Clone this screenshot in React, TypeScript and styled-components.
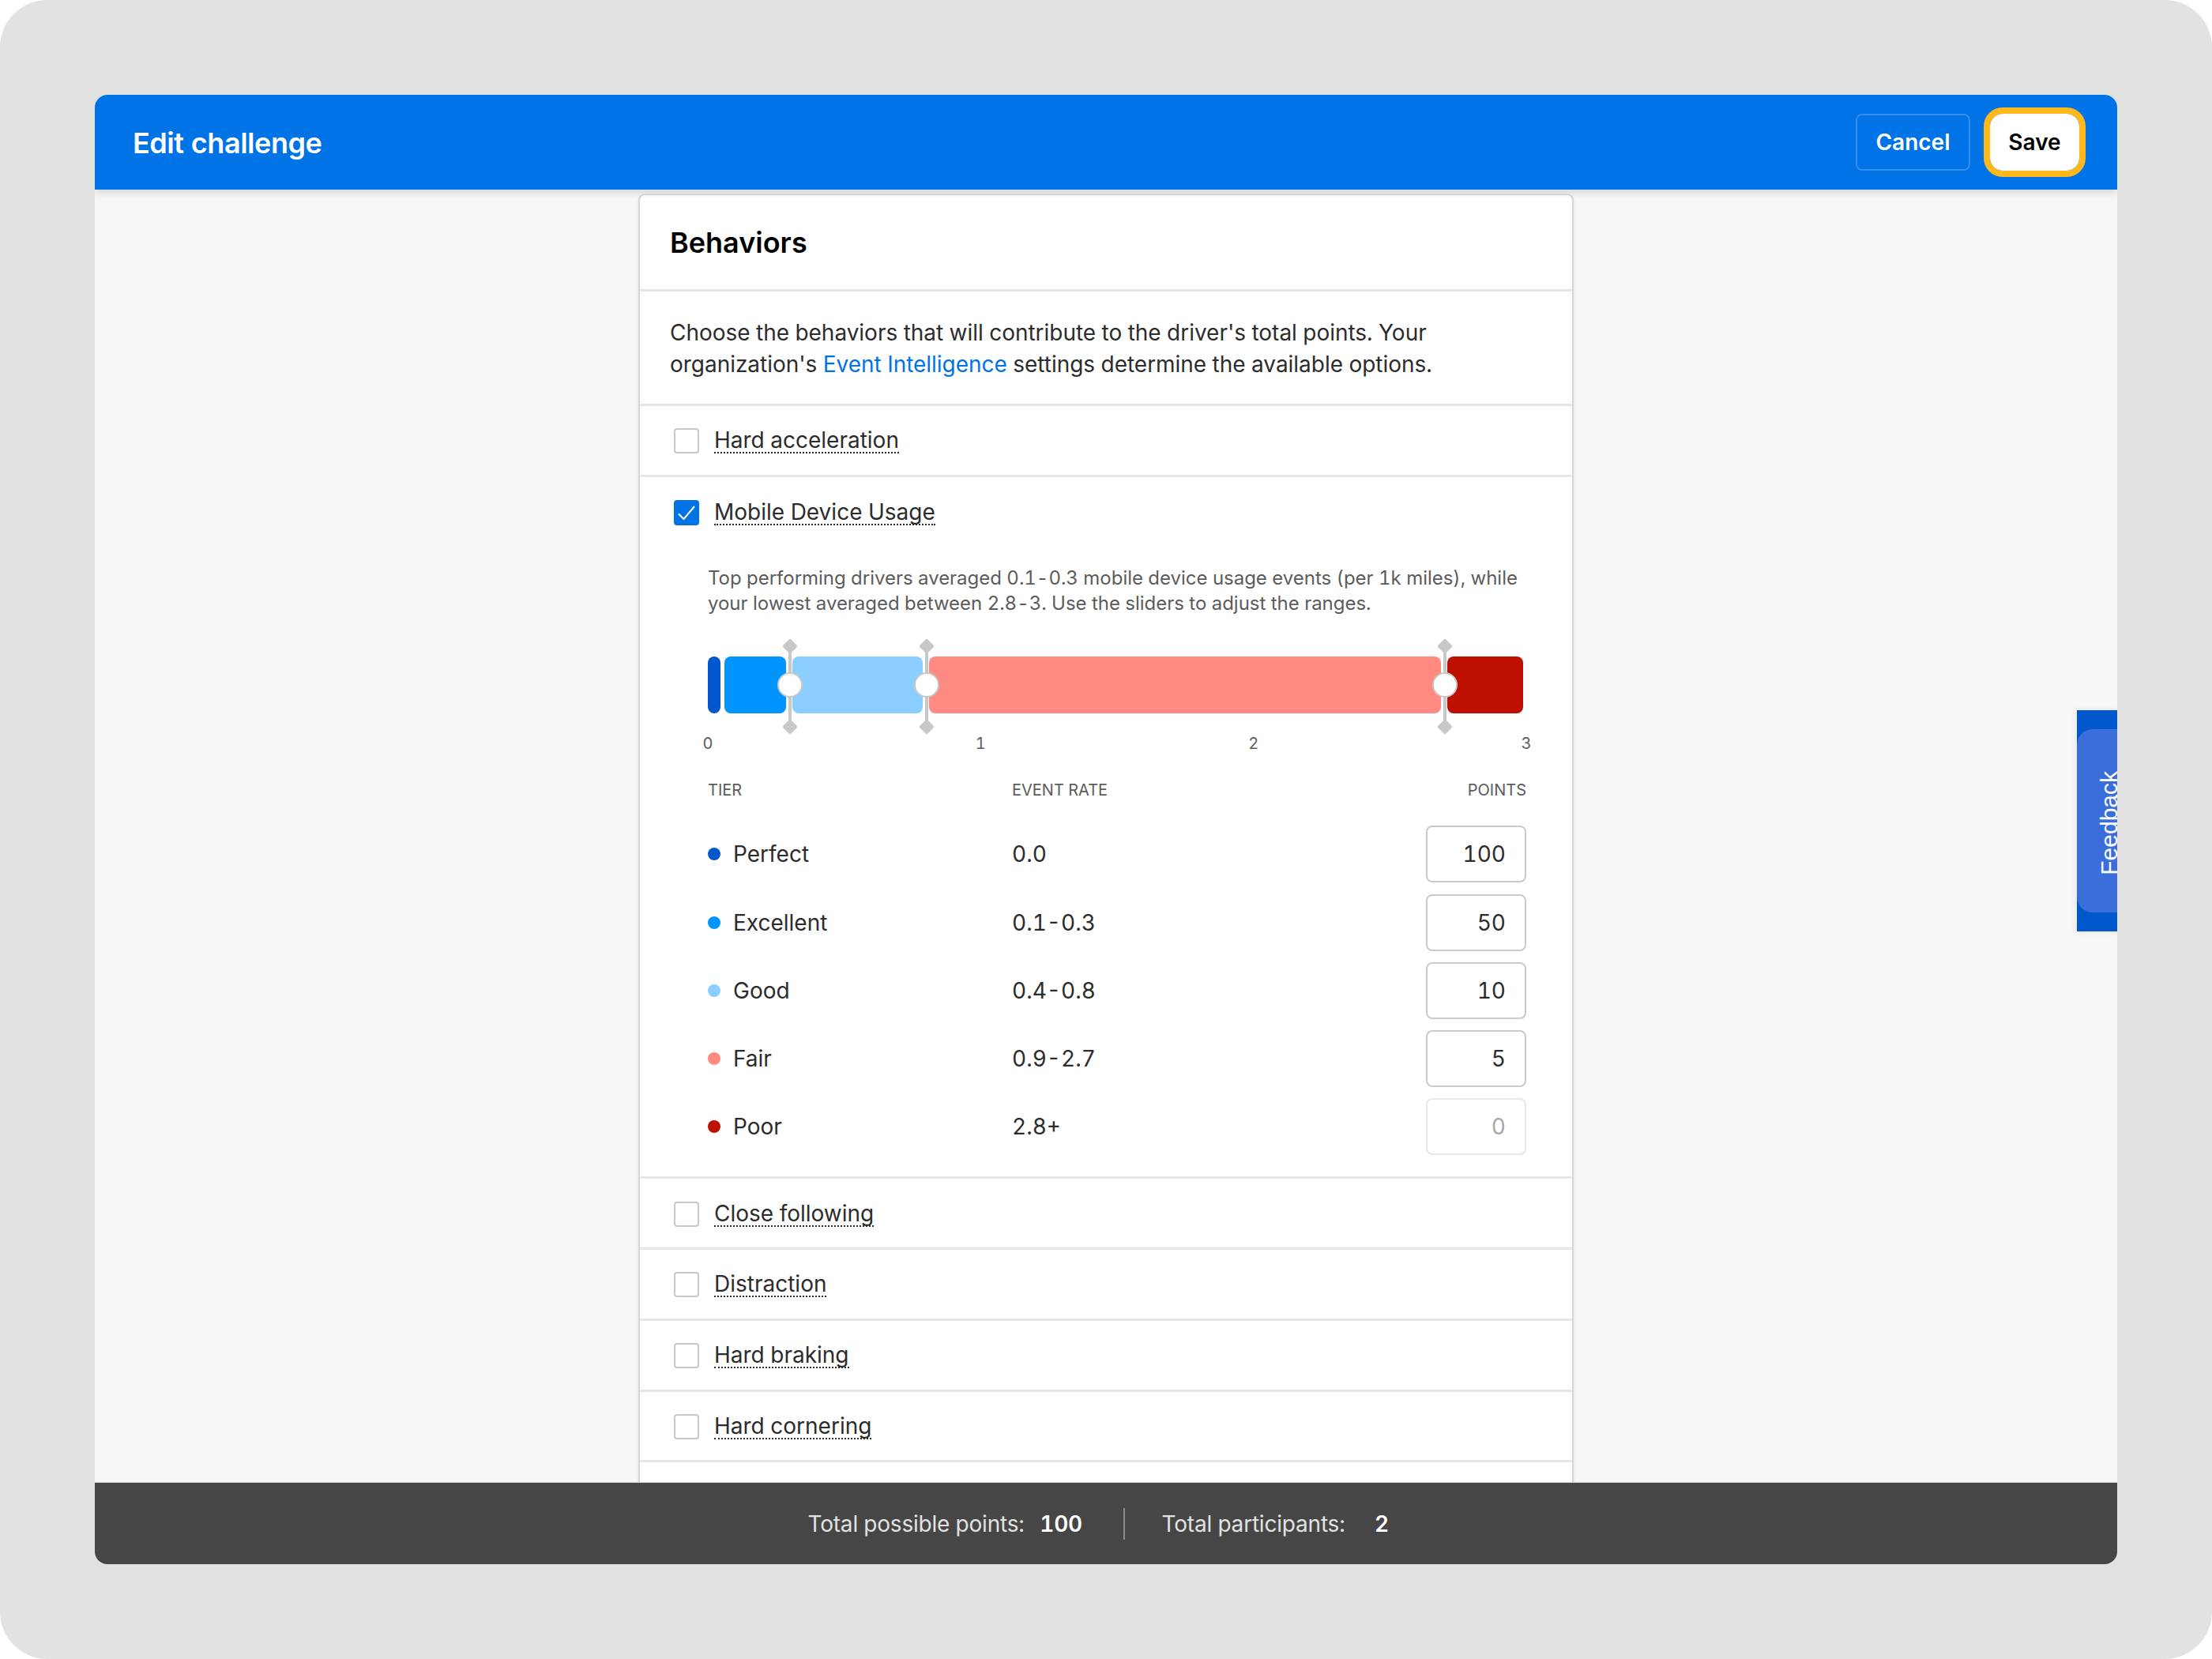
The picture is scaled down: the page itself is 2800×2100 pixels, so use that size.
import styled, { createGlobalStyle } from "styled-components";

const GlobalStyle = createGlobalStyle`
  html, body {
    margin: 0;
    padding: 0;
    background: #fff;
  }
  * {
    box-sizing: border-box;
  }
  body {
    font-family: Inter, "Liberation Sans", sans-serif;
    font-variant-numeric: tabular-nums;
    color: #2c2c2c;
  }
`;

const Page = styled.div`
  width: 2800px;
  height: 2100px;
  padding: 120px;
  background: #e2e2e2;
  border-radius: 60px;
`;

const Window = styled.div`
  position: relative;
  display: flex;
  flex-direction: column;
  height: 1860px;
  border-radius: 16px;
  overflow: hidden;
  background: #f7f7f7;
`;

const Header = styled.header`
  position: relative;
  z-index: 2;
  flex: none;
  display: flex;
  align-items: center;
  justify-content: space-between;
  height: 120px;
  padding: 0 48px;
  background: #0073e6;
  box-shadow: 0 4px 10px rgba(0, 0, 0, 0.14);
`;

const Title = styled.h1`
  margin: 2px 0 0;
  font-size: 36px;
  font-weight: 600;
  letter-spacing: -0.45px;
  color: #fff;
`;

const Actions = styled.div`
  display: flex;
  align-items: center;
  gap: 25px;
`;

const CancelButton = styled.button`
  width: 145px;
  height: 72px;
  padding: 0;
  border: 2px solid rgba(255, 255, 255, 0.2);
  border-radius: 8px;
  background: transparent;
  font: 600 28px Inter, sans-serif;
  color: #fff;
`;

const SaveButton = styled.button`
  width: 113px;
  height: 72px;
  padding: 0;
  border: 0;
  border-radius: 16px;
  background: #fff;
  outline: 8px solid #ffb81c;
  font: 600 28px Inter, sans-serif;
  color: #000;
`;

const Main = styled.main`
  flex: 1;
  min-height: 0;
  display: flex;
  justify-content: center;
  padding-top: 6px;
  overflow: hidden;
`;

const Card = styled.section`
  flex: none;
  width: 1184px;
  height: 1800px;
  background: #fff;
  border-radius: 8px 8px 0 0;
  border: solid #d6d6d6;
  border-width: 1px 2px 0;
  box-shadow: 0 0 4px rgba(0, 0, 0, 0.08);
`;

const CardHead = styled.div`
  display: flex;
  align-items: center;
  height: 122px;
  padding: 0 38px;
  border-bottom: 3px solid #e6e6e6;
`;

const CardTitle = styled.h2`
  margin: 0;
  font-size: 36px;
  font-weight: 600;
  color: #000;
`;

const Intro = styled.p`
  margin: 0;
  height: 145px;
  padding: 32px 38px 0;
  font-size: 28px;
  line-height: 40px;
  letter-spacing: -0.03px;
  border-bottom: 3px solid #e6e6e6;
`;

const Link = styled.a`
  color: #0073e6;
  text-decoration: none;
`;

const Behavior = styled.div`
  height: 89.75px;
  display: flex;
  align-items: center;
  gap: 19px;
  padding: 2px 0 0 43px;
  border-bottom: 3px solid #e6e6e6;
`;

const BehaviorOpen = styled.div`
  border-bottom: 3px solid #e6e6e6;
  padding: 0 58px 27px 86px;
`;

const OpenHead = styled.div`
  height: 90px;
  display: flex;
  align-items: center;
  gap: 19px;
  margin-left: -43px;
`;

const Box = styled.span<{ $checked?: boolean }>`
  flex: none;
  width: 32px;
  height: 32px;
  display: flex;
  align-items: center;
  justify-content: center;
  border-radius: 4px;
  border: 2px solid ${(p) => (p.$checked ? "#0073e6" : "#c8c8c8")};
  background: ${(p) => (p.$checked ? "#0073e6" : "#fff")};
`;

const BehaviorName = styled.span`
  font-size: 28px;
  line-height: 30px;
  border-bottom: 2px dotted #2c2c2c;
`;

const Hint = styled.p`
  margin: 22px 0 0;
  font-size: 24px;
  line-height: 32px;
  letter-spacing: -0.02px;
  color: #5c5c5c;
`;

const Slider = styled.div`
  position: relative;
  display: flex;
  width: 1032px;
  height: 72px;
  margin-top: 51px;
`;

const Segment = styled.div<{ $width: number; $gap: number; $color: string }>`
  flex: none;
  width: ${(p) => p.$width}px;
  margin-left: ${(p) => p.$gap}px;
  background: ${(p) => p.$color};
  border-radius: 8px;
`;

const Handle = styled.div<{ $left: number }>`
  position: absolute;
  left: ${(p) => p.$left}px;
  top: -18px;
  bottom: -24px;
  width: 4px;
  margin-left: -2px;
  background: #c8c8c8;

  &::before,
  &::after {
    content: "";
    position: absolute;
    left: -5px;
    width: 14px;
    height: 14px;
    border-radius: 2px;
    background: #c8c8c8;
    transform: rotate(45deg);
  }
  &::before {
    top: -2px;
  }
  &::after {
    bottom: 0;
  }
`;

const Knob = styled.div`
  position: absolute;
  left: -14px;
  top: 38px;
  width: 32px;
  height: 32px;
  border-radius: 50%;
  background: #fff;
  border: 2px solid #c8c8c8;
`;

const Axis = styled.div`
  display: flex;
  justify-content: space-between;
  width: 1036px;
  margin: 26px 0 0;
`;

const Tick = styled.span`
  width: 0;
  display: flex;
  justify-content: center;
  font-size: 20px;
  line-height: 24px;
  color: #5c5c5c;
`;

const Columns = styled.div`
  display: grid;
  grid-template-columns: 385px 1fr 127px;
  align-items: center;
`;

const TableHead = styled(Columns)`
  margin-top: 35px;
  font-size: 20px;
  line-height: 24px;
  color: #5c5c5c;
`;

const PointsLabel = styled.span`
  text-align: right;
`;

const Rows = styled.div`
  display: flex;
  flex-direction: column;
  gap: 14.25px;
  margin-top: 33.5px;
`;

const Tier = styled.span`
  display: flex;
  align-items: center;
  gap: 16px;
  font-size: 28px;
`;

const Dot = styled.i<{ $color: string }>`
  width: 16px;
  height: 16px;
  border-radius: 50%;
  background: ${(p) => p.$color};
`;

const Rate = styled.span`
  font-size: 28px;
`;

const Points = styled.input`
  width: 127px;
  height: 72px;
  padding: 0 24px 0 0;
  border: 2px solid #cacaca;
  border-radius: 8px;
  background: #fff;
  text-align: right;
  font: 400 28px Inter, sans-serif;
  font-variant-numeric: tabular-nums;
  color: #2c2c2c;

  &:disabled {
    border-color: #e8e8e8;
    color: #a8a8a8;
  }
`;

const Footer = styled.footer`
  position: relative;
  z-index: 2;
  flex: none;
  display: flex;
  align-items: center;
  justify-content: center;
  height: 103px;
  background: #464646;
  box-shadow: 0 -1px 0 #d0d0d0;
  font-size: 28px;
  letter-spacing: -0.2px;
  color: #e2e2e2;
`;

const Value = styled.strong`
  min-width: 57px;
  margin-left: 18px;
  text-align: center;
  font-weight: 600;
  color: #fff;
`;

const Split = styled.span`
  width: 2px;
  height: 40px;
  margin: 0 47px 0 50px;
  background: #8a8a8a;
`;

const Feedback = styled.div`
  position: absolute;
  z-index: 1;
  right: 0;
  top: 779px;
  width: 51px;
  height: 280px;
  padding: 24px 0;
  background: #0058cc;
  box-shadow: 0 0 8px rgba(0, 0, 0, 0.1);
`;

const FeedbackInner = styled.div`
  display: flex;
  align-items: center;
  justify-content: flex-end;
  height: 100%;
  border-radius: 20px 0 0 20px;
  background: #3b6ed8;
`;

const FeedbackText = styled.span`
  writing-mode: vertical-rl;
  transform: rotate(180deg);
  margin: 6px -2px 0 0;
  font-family: "Liberation Sans", Arial, sans-serif;
  font-size: 30px;
  line-height: 24px;
  color: #fff;
`;

const segments = [
  { width: 16, gap: 0, color: "#0058cc" },
  { width: 78, gap: 5, color: "#0094ff" },
  { width: 165, gap: 8, color: "#8acfff" },
  { width: 648, gap: 8, color: "#ff8a82" },
  { width: 96, gap: 8, color: "#bd1000" },
];

const tiers = [
  { name: "Perfect", rate: "0.0", points: "100", color: "#0058cc" },
  { name: "Excellent", rate: "0.1-0.3", points: "50", color: "#0094ff" },
  { name: "Good", rate: "0.4-0.8", points: "10", color: "#8acfff" },
  { name: "Fair", rate: "0.9-2.7", points: "5", color: "#ff8a82" },
  { name: "Poor", rate: "2.8+", points: "0", color: "#bd1000", locked: true },
];

function App() {
  return (
    <Page>
      <GlobalStyle />
      <Window>
        <Header>
          <Title>Edit challenge</Title>
          <Actions>
            <CancelButton>Cancel</CancelButton>
            <SaveButton>Save</SaveButton>
          </Actions>
        </Header>
        <Main>
          <Card>
            <CardHead>
              <CardTitle>Behaviors</CardTitle>
            </CardHead>
            <Intro>
              Choose the behaviors that will contribute to the driver's total points. Your
              <br />
              organization's <Link>Event Intelligence</Link> settings determine the available options.
            </Intro>
            <Behavior>
              <Box />
              <BehaviorName>Hard acceleration</BehaviorName>
            </Behavior>
            <BehaviorOpen>
              <OpenHead>
                <Box $checked>
                  <svg width="28" height="28" viewBox="0 0 28 28" fill="none">
                    <path d="M4 15.5 10.5 22 24 6" stroke="#fff" strokeWidth="2" />
                  </svg>
                </Box>
                <BehaviorName>Mobile Device Usage</BehaviorName>
              </OpenHead>
              <Hint>
                Top performing drivers averaged 0.1-0.3 mobile device usage events (per 1k miles), while
                <br />
                your lowest averaged between 2.8-3. Use the sliders to adjust the ranges.
              </Hint>
              <Slider>
                {segments.map((s) => (
                  <Segment key={s.color} $width={s.width} $gap={s.gap} $color={s.color} />
                ))}
                <Handle $left={104}>
                  <Knob />
                </Handle>
                <Handle $left={277}>
                  <Knob />
                </Handle>
                <Handle $left={933}>
                  <Knob />
                </Handle>
              </Slider>
              <Axis>
                <Tick>0</Tick>
                <Tick>1</Tick>
                <Tick>2</Tick>
                <Tick>3</Tick>
              </Axis>
              <TableHead>
                <span>TIER</span>
                <span>EVENT RATE</span>
                <PointsLabel>POINTS</PointsLabel>
              </TableHead>
              <Rows>
                {tiers.map((t) => (
                  <Columns key={t.name}>
                    <Tier>
                      <Dot $color={t.color} />
                      {t.name}
                    </Tier>
                    <Rate>{t.rate}</Rate>
                    <Points defaultValue={t.points} disabled={t.locked} />
                  </Columns>
                ))}
              </Rows>
            </BehaviorOpen>
            {["Close following", "Distraction", "Hard braking", "Hard cornering"].map((name) => (
              <Behavior key={name}>
                <Box />
                <BehaviorName>{name}</BehaviorName>
              </Behavior>
            ))}
          </Card>
        </Main>
        <Footer>
          Total possible points:
          <Value>100</Value>
          <Split />
          Total participants:
          <Value>2</Value>
        </Footer>
        <Feedback>
          <FeedbackInner>
            <FeedbackText>Feedback</FeedbackText>
          </FeedbackInner>
        </Feedback>
      </Window>
    </Page>
  );
}

export default App;
